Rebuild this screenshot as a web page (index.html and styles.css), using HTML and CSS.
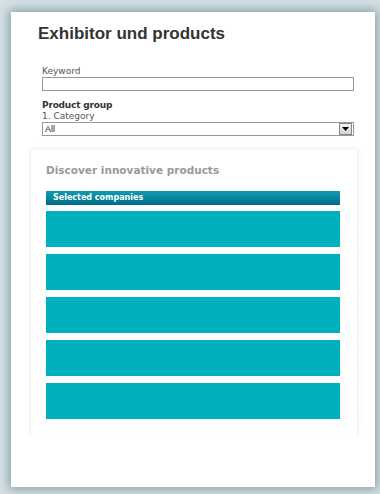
FILE: index.html
```html
<!DOCTYPE html>
<html>
<head>
    <title>Exhibitor und products</title>
    <link rel="stylesheet" href="styles.css">
</head>
<body>
    <div class="panel">
        <h1 class="page-title">Exhibitor und products</h1>

        <div class="search-form">
            <label class="field-label" for="keyword">Keyword</label>
            <input class="text-input" id="keyword" type="text">

            <div class="group-title">Product group</div>
            <label class="field-label" for="category">1. Category</label>
            <div class="fake-select">
                <span class="select-value">All</span>
                <span class="select-btn">
                    <svg width="7" height="4" viewBox="0 0 7 4"><path d="M0 0h7L3.5 4z" fill="#000"/></svg>
                </span>
            </div>
        </div>

        <div class="discover">
            <h2 class="discover-title">Discover innovative products</h2>
            <div class="companies-bar">Selected companies</div>
            <div class="company-list">
                <div class="company-tile"></div>
                <div class="company-tile"></div>
                <div class="company-tile"></div>
                <div class="company-tile"></div>
                <div class="company-tile"></div>
            </div>
        </div>
    </div>
</body>
</html>
```

FILE: styles.css
```css
body { margin: 0; background: #d4e1e5; height: 494px; overflow: hidden; }
.panel { box-sizing: border-box; margin: 12px 5px 0 11px; width: 364px; height: 475px; background: #fff; box-shadow: 0 0 10px 2px rgba(40, 70, 80, .45); padding-top: 12px; }
.page-title { margin: 0 0 0 27px; font: bold 17px "Liberation Sans", Arial, sans-serif; color: #333; line-height: 20px; }
.search-form { margin: 22px 0 0 31px; width: 312px; font-family: "DejaVu Sans", Verdana, sans-serif; }
.field-label { display: block; font-size: 9px; color: #555; line-height: 11px; }
.text-input { display: block; box-sizing: border-box; width: 312px; height: 14px; margin: 0 0 8px; border: 1px solid #999; padding: 0; }
.group-title { font-size: 9px; font-weight: bold; color: #333; line-height: 12px; letter-spacing: -.2px; }
.fake-select { box-sizing: border-box; width: 312px; height: 14px; border: 1px solid #999; display: flex; align-items: center; justify-content: space-between; font-size: 9px; color: #222; }
.select-value { padding-left: 2px; font-family: "Liberation Sans", Arial, sans-serif; }
.select-btn { box-sizing: border-box; width: 13px; height: 12px; margin-right: 1px; background: linear-gradient(#f4f4f4, #d4d4d4); border: 1px solid #888; display: flex; align-items: center; justify-content: center; }
.discover { box-sizing: border-box; margin: 14px 0 0 19px; width: 328px; height: 285px; padding: 13px 17px 0 15px; border-left: 1px solid #eee; border-right: 1px solid #eee; box-shadow: 0 -2px 6px rgba(0, 0, 0, .06); }
.discover-title { margin: 0; font: bold 10.5px "DejaVu Sans", Verdana, sans-serif; color: #999; line-height: 14px; }
.companies-bar { margin-top: 14px; height: 14px; background: linear-gradient(#0e9db5, #006b86); color: #fff; font: bold 8px "DejaVu Sans", Verdana, sans-serif; line-height: 14px; padding-left: 7px; }
.company-list { display: flex; flex-direction: column; gap: 7px; margin-top: 6px; }
.company-tile { height: 36px; background: #00b1bd; }
```
